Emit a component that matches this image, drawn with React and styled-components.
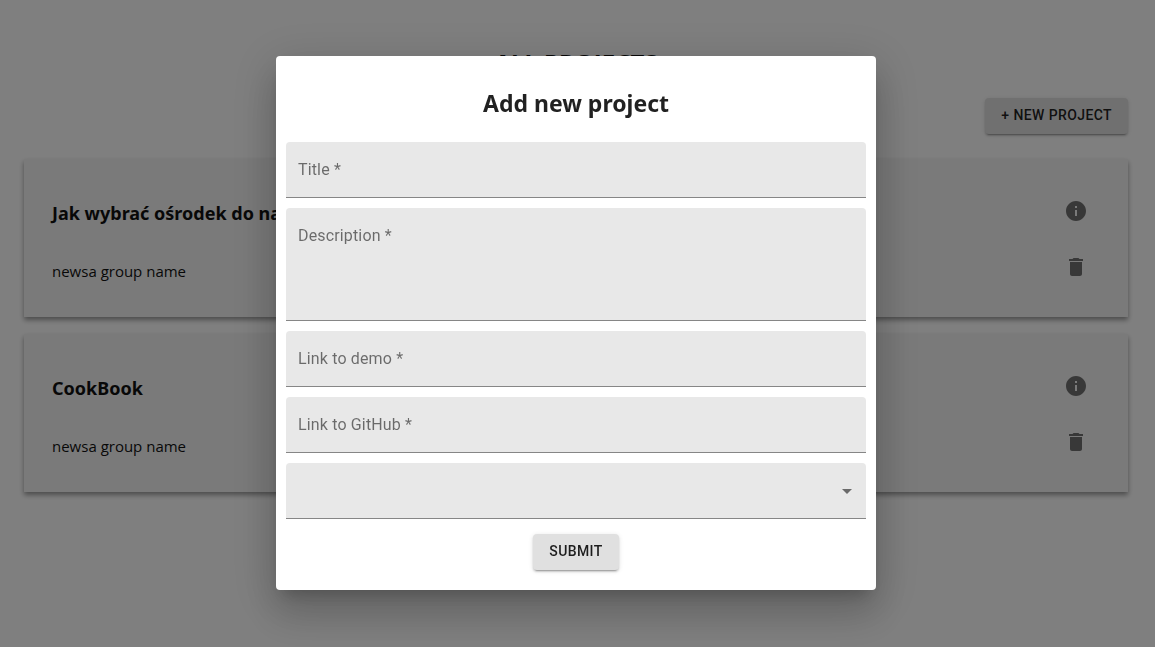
import React from "react";
import styled, { createGlobalStyle } from "styled-components";
import { MdArrowDropDown, MdDelete, MdInfo } from "react-icons/md";

const pageFont = `"Noto Sans", "Open Sans", sans-serif`;
const controlFont = `Roboto, "Liberation Sans", sans-serif`;

const GlobalStyle = createGlobalStyle`
  *, *::before, *::after { box-sizing: border-box; }
  body {
    margin: 0;
    background: #fff;
    color: #111;
    font-family: ${pageFont};
  }
`;

const Page = styled.main`
  padding: 40px 27px 40px 24px;
`;

const PageTitle = styled.h1`
  margin: 0;
  font-size: 24px;
  line-height: 46px;
  text-align: center;
`;

const Toolbar = styled.div`
  display: flex;
  justify-content: flex-end;
  padding: 12px 0 25px;
`;

const Button = styled.button`
  height: 36px;
  padding: 0 16px 2px;
  border: 0;
  border-radius: 4px;
  background: #e0e0e0;
  color: rgba(0, 0, 0, 0.87);
  font: 500 14px / 34px ${controlFont};
  letter-spacing: 0.02857em;
  text-transform: uppercase;
  cursor: pointer;
  box-shadow: 0 3px 1px -2px rgba(0, 0, 0, 0.2),
    0 2px 2px 0 rgba(0, 0, 0, 0.14), 0 1px 5px 0 rgba(0, 0, 0, 0.12);
`;

const ProjectList = styled.div`
  display: grid;
  gap: 17px;
`;

const Card = styled.article`
  display: flex;
  justify-content: space-between;
  padding: 24px 28px 22px;
  background: #f5f5f5;
  box-shadow: 0 3px 5px rgba(0, 0, 0, 0.4);
`;

const CardText = styled.div`
  display: flex;
  flex-direction: column;
  gap: 34px;
  padding-top: 18px;
`;

const CardTitle = styled.h2`
  margin: 0;
  font-size: 18px;
  line-height: 24px;
`;

const GroupName = styled.p`
  margin: 0;
  font-family: "Open Sans", sans-serif;
  font-size: 15px;
  line-height: 24px;
`;

const CardActions = styled.div`
  display: grid;
  grid-auto-rows: 56px;
  align-items: center;
`;

const IconButton = styled.button`
  display: flex;
  padding: 12px;
  border: 0;
  background: transparent;
  color: rgba(0, 0, 0, 0.54);
  cursor: pointer;
`;

const Backdrop = styled.div`
  position: fixed;
  inset: 0;
  display: flex;
  align-items: center;
  justify-content: center;
  padding: 0 3px 1px 0;
  background: rgba(0, 0, 0, 0.5);
`;

const Dialog = styled.div`
  width: 600px;
  max-width: 100%;
  padding: 23px 10px 20px;
  border-radius: 4px;
  background: #fff;
  color: rgba(0, 0, 0, 0.87);
  box-shadow: 0 11px 15px -7px rgba(0, 0, 0, 0.2),
    0 24px 38px 3px rgba(0, 0, 0, 0.14), 0 9px 46px 8px rgba(0, 0, 0, 0.12);
`;

const DialogTitle = styled.h2`
  margin: 0 0 15px;
  font-size: 23px;
  line-height: 48px;
  text-align: center;
`;

const Form = styled.form`
  display: flex;
  flex-direction: column;
  gap: 10px;
`;

const Field = styled.div`
  position: relative;
  display: flex;
  height: ${(p) => (p.$tall ? 113 : 56)}px;
  border-bottom: 1px solid #868686;
  border-radius: 4px 4px 0 0;
  background: #e8e8e8;
  color: rgba(0, 0, 0, 0.54);
`;

const Label = styled.label`
  position: absolute;
  top: 16px;
  left: 12px;
  font: 400 16px / 24px ${controlFont};
  letter-spacing: 0.00938em;
  pointer-events: none;
`;

const Input = styled.input`
  flex: 1;
  min-width: 0;
  padding: 24px 12px 8px;
  border: 0;
  outline: 0;
  background: transparent;
  font: 400 16px / 24px ${controlFont};
  resize: none;
`;

const Select = styled.select`
  flex: 1;
  padding: 0 32px 0 12px;
  border: 0;
  outline: 0;
  appearance: none;
  background: transparent;
  font: 400 16px / 24px ${controlFont};
`;

const SelectArrow = styled(MdArrowDropDown)`
  position: absolute;
  top: 16px;
  right: 7px;
  pointer-events: none;
`;

const FormFooter = styled.div`
  display: flex;
  justify-content: center;
  padding-top: 5px;
`;

const projects = [
  { title: "Jak wybrać ośrodek do nauki", group: "newsa group name" },
  { title: "CookBook", group: "newsa group name" },
];

const fields = [
  { id: "title", label: "Title" },
  { id: "description", label: "Description", tall: true },
  { id: "demo", label: "Link to demo" },
  { id: "github", label: "Link to GitHub" },
];

export default function App() {
  return (
    <>
      <GlobalStyle />
      <Page>
        <PageTitle>ALL PROJECTS</PageTitle>
        <Toolbar>
          <Button type="button">+ New project</Button>
        </Toolbar>
        <ProjectList>
          {projects.map((project) => (
            <Card key={project.title}>
              <CardText>
                <CardTitle>{project.title}</CardTitle>
                <GroupName>{project.group}</GroupName>
              </CardText>
              <CardActions>
                <IconButton type="button" aria-label="Details">
                  <MdInfo size={24} />
                </IconButton>
                <IconButton type="button" aria-label="Delete">
                  <MdDelete size={24} />
                </IconButton>
              </CardActions>
            </Card>
          ))}
        </ProjectList>
      </Page>
      <Backdrop>
        <Dialog role="dialog" aria-modal="true" aria-labelledby="dialog-title">
          <DialogTitle id="dialog-title">Add new project</DialogTitle>
          <Form onSubmit={(event) => event.preventDefault()}>
            {fields.map(({ id, label, tall }) => (
              <Field key={id} $tall={tall}>
                <Label htmlFor={id}>{label} *</Label>
                <Input as={tall ? "textarea" : "input"} id={id} required />
              </Field>
            ))}
            <Field>
              <Select aria-label="Group" defaultValue="">
                <option value="" />
                <option value="newsa">newsa group name</option>
              </Select>
              <SelectArrow size={24} />
            </Field>
            <FormFooter>
              <Button type="submit">Submit</Button>
            </FormFooter>
          </Form>
        </Dialog>
      </Backdrop>
    </>
  );
}
